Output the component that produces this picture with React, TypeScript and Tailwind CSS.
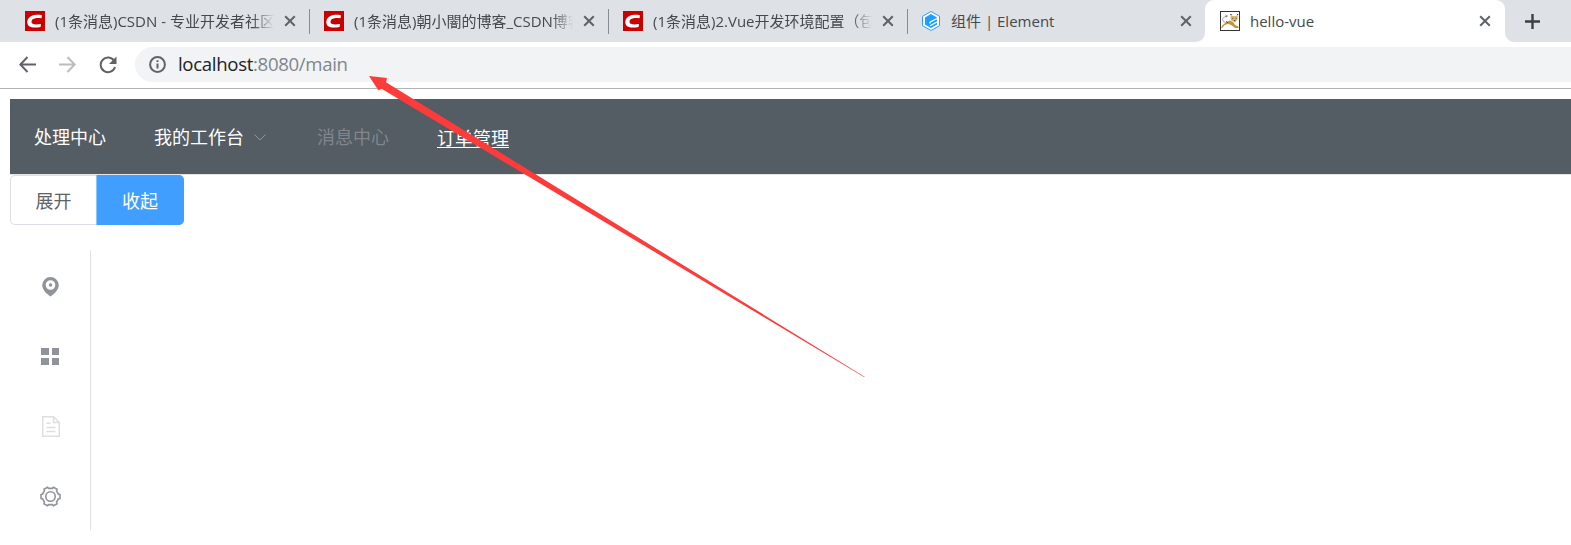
import type { ReactNode } from "react";

function Close({ className = "" }: { className?: string }) {
  return (
    <svg className={"shrink-0 " + className} width="12" height="12" viewBox="0 0 12 12" fill="none" stroke="#5f6368" strokeWidth="2">
      <path d="M1.2 1.2 10.8 10.8M10.8 1.2 1.2 10.8" />
    </svg>
  );
}

function CsdnIcon() {
  return (
    <svg className="shrink-0" width="20" height="20" viewBox="0 0 20 20">
      <rect width="20" height="20" fill="#c90000" />
      <path d="M17 4.200C11 3 3.200 4.200 2.300 10.500 1.800 16.800 8.500 17.300 15.600 15.900L16 13C10.500 14 6.300 13.700 6.500 10.500 7 6.800 12 6.600 16.500 7.200Z" fill="#fff" />
    </svg>
  );
}

function ElementIcon() {
  return (
    <svg className="shrink-0" width="20" height="20" viewBox="0 0 20 20">
      <path d="M10 .5 18.500 5.300V14.700L10 19.500 1.500 14.700V5.300Z" fill="#fff" stroke="#2ba0ff" strokeWidth="1" />
      <path d="M10 3 16 6.400V13.600L10 17 4 13.600V6.400Z" fill="#1e9fff" />
      <path d="M16.500 7.200 9 11.200V12.500M16.500 10.700 9 14.700" fill="none" stroke="#fff" strokeWidth="1.300" />
    </svg>
  );
}

function TomcatIcon() {
  return (
    <svg className="shrink-0" width="20" height="20" viewBox="0 0 20 20">
      <rect x=".5" y=".5" width="19" height="19" fill="#fff" stroke="#333" />
      <path d="M7 6C4 5 1.800 7.500 3 10L5.500 11.500" fill="none" stroke="#aaa" />
      <path d="M1 16.500C2.500 13.500 6 11 10 9.500L13.500 11.500 15 14 18.500 15.500V17H15L12 14.500 8 12.800 4.500 14.300 2 17Z" fill="#c8923a" />
      <path d="M10.800 3.500 12.500 5H16L17.700 3.500 17.600 8.500 15 11.500 11.500 9.800 10.500 7Z" fill="#ddb766" />
      <path d="M10.200 3.500h1.500M17 3.500h1.300M5.500 5h2M6 10.500 8 11.800M12.200 7.300h1M15.500 7.300h1M13.800 9.500h1.500" stroke="#333" strokeWidth=".9" />
    </svg>
  );
}

function Tab({ icon, title, fade = false }: { icon: ReactNode; title: string; fade?: boolean }) {
  return (
    <div className="flex h-full w-[299px] shrink-0 items-center pl-[15px]">
      {icon}
      <div
        className={
          "ml-[10px] h-[24px] w-[219px] shrink-0 overflow-hidden whitespace-nowrap text-[15px] leading-[24px] text-[#45494d]" +
          (fade ? " [mask-image:linear-gradient(to_right,black_198px,transparent_219px)]" : "")
        }
      >
        {title}
      </div>
      <Close className="ml-[10px]" />
    </div>
  );
}

function Divider() {
  return <div className="-mr-px h-[25px] w-px shrink-0 bg-[#888b8f]" />;
}

function TabStrip() {
  return (
    <div className="flex h-[42px] items-center overflow-hidden bg-[#dee1e6] pl-[10px]">
      <Tab icon={<CsdnIcon />} title="(1条消息)CSDN - 专业开发者社区" fade />
      <Divider />
      <Tab icon={<CsdnIcon />} title="(1条消息)朝小闇的博客_CSDN博客" fade />
      <Divider />
      <Tab icon={<CsdnIcon />} title="(1条消息)2.Vue开发环境配置（包括" fade />
      <Divider />
      <div className="-ml-px h-full shrink-0">
        <Tab icon={<ElementIcon />} title="组件 | Element" />
      </div>
      <div className="relative h-full shrink-0 rounded-t-[9px] bg-white">
        <svg className="absolute -left-[9px] bottom-0" width="9" height="9">
          <path d="M9 0V9H0A9 9 0 0 0 9 0Z" fill="#fff" />
        </svg>
        <div className="h-full w-[300px]">
          <Tab icon={<TomcatIcon />} title="hello-vue" />
        </div>
        <svg className="absolute -right-[9px] bottom-0" width="9" height="9">
          <path d="M0 0V9H9A9 9 0 0 1 0 0Z" fill="#fff" />
        </svg>
      </div>
      <svg className="ml-[20px] shrink-0" width="15" height="15" viewBox="0 0 15 15" stroke="#3c4043" strokeWidth="2.400">
        <path d="M7.500 0V15M0 7.500H15" />
      </svg>
    </div>
  );
}

function AddressBar() {
  return (
    <div className="flex h-[47px] items-start border-b border-[#b3b3b3] pt-[5px]">
      <div className="flex h-[35px] w-[135px] shrink-0 items-center pl-[19px]">
        <svg width="17" height="17" viewBox="0 0 17 17" fill="none" stroke="#5f6368" strokeWidth="2">
          <path d="M17 8.500H1.500M8.500 1 1.300 8.500 8.500 16" />
        </svg>
        <svg className="ml-[23px]" width="17" height="17" viewBox="0 0 17 17" fill="none" stroke="#babcbe" strokeWidth="2">
          <path d="M0 8.500H15.500M8.500 1 15.700 8.500 8.500 16" />
        </svg>
        <svg className="ml-[23px]" width="18" height="18" viewBox="0 0 18 18">
          <path d="M15.200 5A7.300 7.300 0 1 0 16 11" fill="none" stroke="#5f6368" strokeWidth="2" />
          <path d="M17.500 .5V8H10Z" fill="#5f6368" />
        </svg>
      </div>
      <div className="flex h-[35px] grow items-center rounded-l-full bg-[#f1f3f4] pl-[14px]">
        <svg width="17" height="17" viewBox="0 0 17 17" fill="none" stroke="#5f6368" strokeWidth="2">
          <circle cx="8.500" cy="8.500" r="7.400" />
          <path d="M8.500 7.500V12.600M8.500 4.200V6" />
        </svg>
        <span className="-mt-[2px] ml-[12px] text-[18.6px] leading-[34px] tracking-[-0.320px] text-[#80868b]">
          <span className="text-[#202124]">localhost</span>:8080/main
        </span>
      </div>
    </div>
  );
}

function NavMenu() {
  return (
    <nav className="flex h-[76px] border-b border-[#e6e6e6] bg-[#545c64] pl-[24px] text-[18px] leading-[74px] text-white">
      <span className="w-[120px]">处理中心</span>
      <span className="flex w-[163px]">
        我的工作台
        <svg className="ml-[10px] mt-[35px]" width="12" height="7" viewBox="0 0 12 7" fill="none" stroke="#909399">
          <path d="M.5 .5 6 6 11.500 .5" />
        </svg>
      </span>
      <span className="w-[120px] text-[#82868c]">消息中心</span>
      <span className="pt-px underline underline-offset-2">订单管理</span>
    </nav>
  );
}

function Sidebar() {
  return (
    <aside className="mt-[25px] flex h-[280px] w-[81px] flex-col border-r border-[#e2e2e2]">
      <div className="flex h-[70px] items-center justify-center pt-[3px]">
        <svg width="17" height="20" viewBox="0 0 17 20">
          <path fillRule="evenodd" d="M8.500 0A8.300 8.300 0 0 0 .2 8.200C.2 12 4 16.500 8.500 19.500 13 16.500 16.800 12 16.800 8.200A8.300 8.300 0 0 0 8.500 0ZM8.500 3.200A4.800 4.800 0 1 1 8.500 12.800 4.800 4.800 0 0 1 8.500 3.200Z" fill="#909399" />
          <circle cx="8.500" cy="8" r="1.700" fill="#909399" />
        </svg>
      </div>
      <div className="flex h-[70px] items-center justify-center pt-[3px]">
        <div className="grid grid-cols-[8px_7px] grid-rows-[7px_7px] gap-[3px]">
          <i className="bg-[#909399]" />
          <i className="bg-[#909399]" />
          <i className="bg-[#909399]" />
          <i className="bg-[#909399]" />
        </div>
      </div>
      <div className="flex h-[70px] items-center justify-center pl-px pt-[3px]">
        <svg width="18" height="21" viewBox="0 0 18 21" fill="none" stroke="#dedfe1" strokeWidth="1.500">
          <path d="M.7 .7H11.500L17.300 6.500V20.300H.7ZM11.500 .7V6.500H17.300M4.500 7.200H8.500M4.500 11.500H13.500M4.500 15.500H13.500" />
        </svg>
      </div>
      <div className="flex h-[70px] items-center justify-center pt-[2px]">
        <svg width="21" height="21" viewBox="0 0 21 21" fill="none" stroke="#909399" strokeWidth="1.600">
          <path d="M7.500 1.200 8.700 2.400H12.300L13.500 1.200 17 3.200 16.600 4.900 18.300 8 20 8.500V12.500L18.300 13 16.600 16.100 17 17.800 13.500 19.800 12.300 18.600H8.700L7.500 19.800 4 17.800 4.400 16.100 2.700 13 1 12.500V8.500L2.700 8 4.400 4.900 4 3.200Z" />
          <circle cx="10.500" cy="10.500" r="4.700" />
        </svg>
      </div>
    </aside>
  );
}

export default function App() {
  return (
    <div className="relative h-[545px] w-[1571px] overflow-hidden bg-white font-['Open_Sans','Noto_Sans_CJK_SC',sans-serif]">
      <TabStrip />
      <AddressBar />
      <main className="pl-[10px] pt-[10px] font-['Noto_Sans_CJK_SC',sans-serif]">
        <NavMenu />
        <div className="flex h-[50px] text-[18px] leading-[48px]">
          <button className="w-[86px] rounded-l-[5px] border border-r-0 border-[#dcdfe6] text-[#606266]">展开</button>
          <button className="w-[88px] rounded-r-[5px] border border-[#409eff] border-l-[#8cc5ff] bg-[#409eff] text-white">收起</button>
        </div>
        <Sidebar />
      </main>
      <svg className="pointer-events-none absolute left-0 top-0" width="1571" height="545">
        <path d="M369 76 387 78 386 82.300 865 377 864 377 381.500 88.700 378.500 90.500Z" fill="#fc3b3b" />
      </svg>
    </div>
  );
}
